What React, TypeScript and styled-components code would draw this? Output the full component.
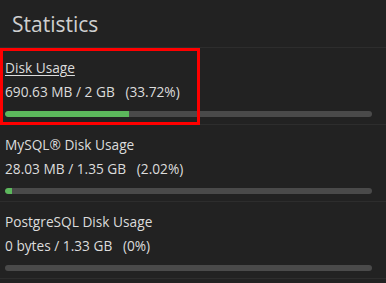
import React from "react";
import styled, { createGlobalStyle } from "styled-components";

const Global = createGlobalStyle`
  html, body { margin: 0; padding: 0; background: #222222; }
  body { font-family: "Open Sans", "Liberation Sans", sans-serif; }
`;

const Panel = styled.div`
  position: relative;
  width: 386px;
  height: 283px;
  background: #222222;
  overflow: hidden;
`;

const Header = styled.h2`
  margin: 0;
  height: 48px;
  box-sizing: border-box;
  padding: 10px 0 0 12px;
  font-size: 21px;
  font-weight: 400;
  line-height: 28px;
  color: #cfcfcf;
  border-bottom: 1px solid #2d2d2d;
`;

const Item = styled.div`
  height: 77px;
  box-sizing: border-box;
  padding: 10px 14px 0 5px;
  border-bottom: 1px solid #2d2d2d;
  color: #dcdcdc;
  font-size: 13.7px;
  line-height: 19px;
`;

const Title = styled.div<{ $link?: boolean }>`
  text-decoration: ${(p) => (p.$link ? "underline" : "none")};
  text-underline-offset: 2px;
  color: #dcdcdc;
`;

const Value = styled.div`
  margin-top: 5px;
  white-space: pre;
`;

const Track = styled.div`
  margin-top: 10px;
  height: 6px;
  border-radius: 3px;
  background: #4a4a4a;
  overflow: hidden;
`;

const Fill = styled.div`
  height: 100%;
  background: #5cb85c;
  border-radius: 3px 0 0 3px;
`;

const Highlight = styled.div`
  position: absolute;
  left: 0;
  top: 48px;
  width: 200px;
  height: 77px;
  box-sizing: border-box;
  border: 3.5px solid #ff0000;
  pointer-events: none;
`;

const items = [
  { title: "Disk Usage", value: "690.63 MB / 2 GB   (33.72%)", pct: 33.72, link: true },
  { title: "MySQL® Disk Usage", value: "28.03 MB / 1.35 GB   (2.02%)", pct: 2.02, link: false },
  { title: "PostgreSQL Disk Usage", value: "0 bytes / 1.33 GB   (0%)", pct: 0, link: false },
];

export default function App() {
  return (
    <Panel>
      <Global />
      <Header>Statistics</Header>
      {items.map((it) => (
        <Item key={it.title}>
          <Title $link={it.link}>{it.title}</Title>
          <Value>{it.value}</Value>
          <Track>
            <Fill style={{ width: `${it.pct}%` }} />
          </Track>
        </Item>
      ))}
      <Highlight />
    </Panel>
  );
}
